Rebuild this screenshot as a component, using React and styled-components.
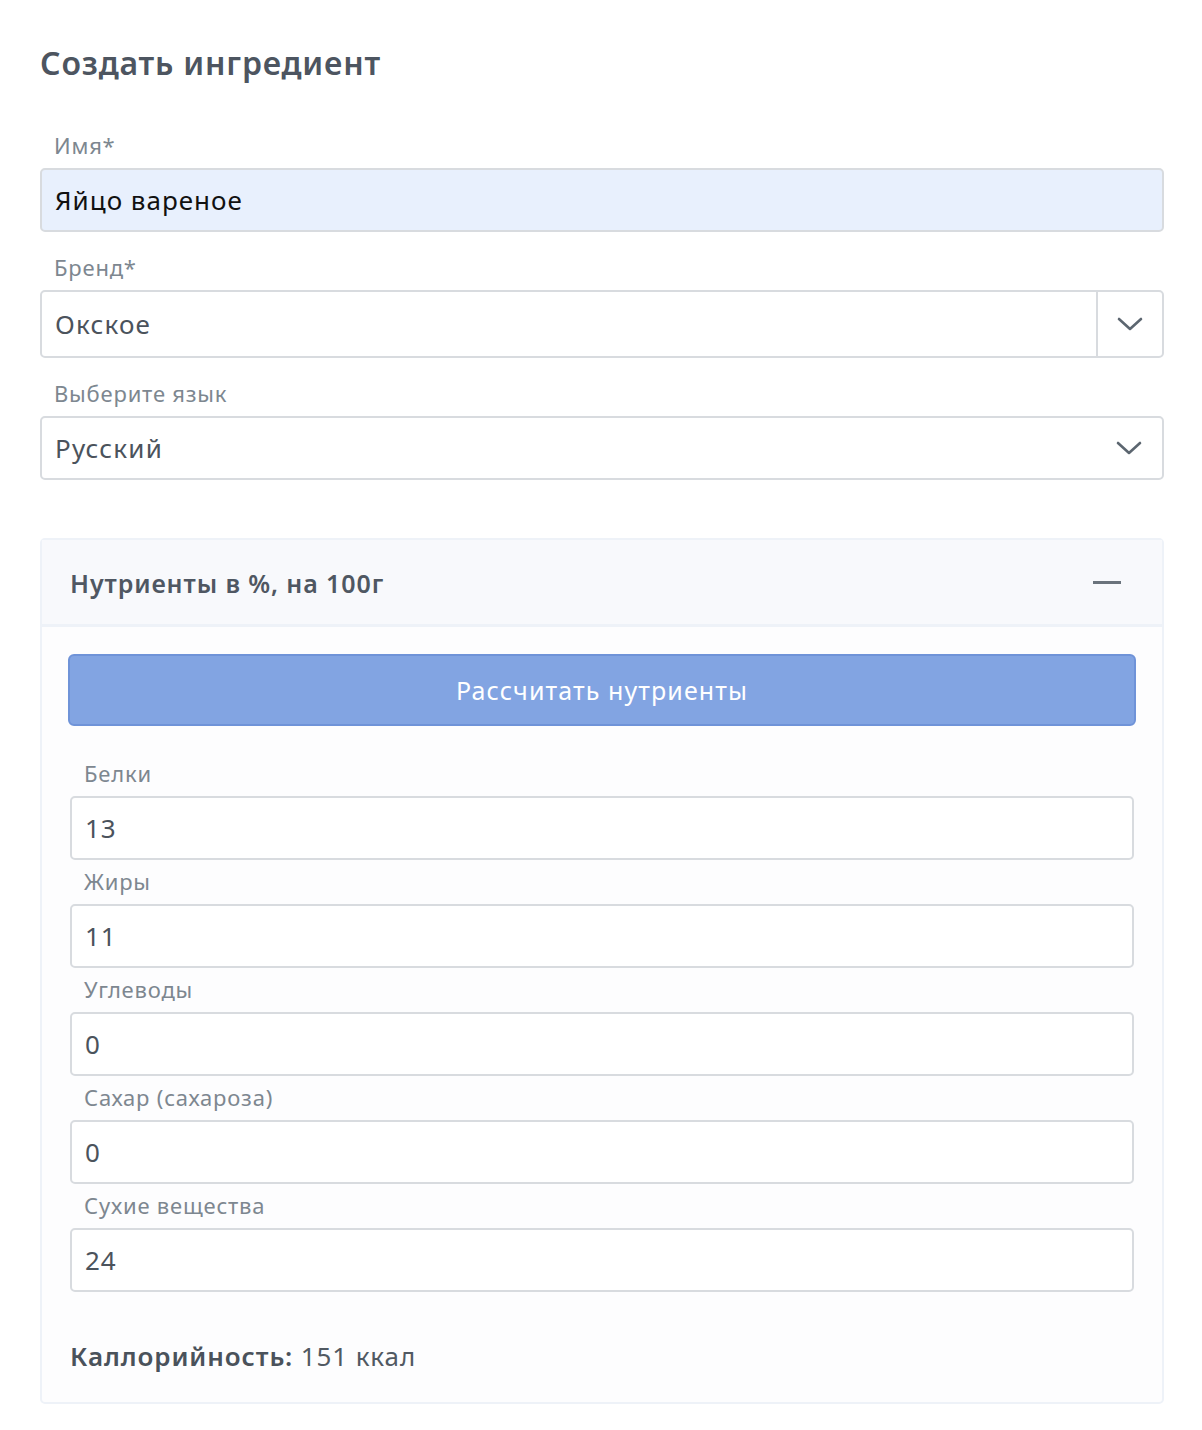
import React from "react";
import styled, { createGlobalStyle } from "styled-components";

const Global = createGlobalStyle`
  html, body { margin: 0; padding: 0; background: #ffffff; }
  body { font-family: "Noto Sans", "Open Sans", Lato, sans-serif; -webkit-font-smoothing: antialiased; }
  * { box-sizing: border-box; }
`;

const Page = styled.div`
  padding: 40px 38px 30px 40px;
`;

const Title = styled.h1`
  margin: 0 0 44px 0;
  font-size: 32px;
  line-height: 46px;
  font-weight: 600;
  color: #4d5560;
  letter-spacing: 0.8px;
`;

const Group = styled.div`
  display: flex;
  flex-direction: column;
  margin-bottom: ${(p) => p.$mb ?? 20}px;
`;

const Label = styled.label`
  font-size: 22px;
  line-height: 30px;
  color: #7d8790;
  padding-left: 14px;
  margin-bottom: 8px;
  letter-spacing: 0.8px;
`;

const Input = styled.div`
  height: 64px;
  flex: none;
  display: flex;
  align-items: center;
  padding: 0 13px;
  border: 2px solid #d8dbdf;
  border-radius: 5px;
  background: ${(p) => (p.$filled ? "#e8f0fd" : "#fff")};
  color: ${(p) => (p.$filled ? "#111" : "#4b535c")};
  font-size: 26px;
  letter-spacing: 1px;
`;

const SelectBox = styled.div`
  height: ${(p) => p.$h}px;
  flex: none;
  display: flex;
  align-items: stretch;
  border: 2px solid #d8dbdf;
  border-radius: 5px;
  background: #fff;
`;

const SelectValue = styled.div`
  flex: 1;
  display: flex;
  align-items: center;
  padding: 0 13px;
  font-size: 26px;
  color: #4b535c;
  letter-spacing: 1.2px;
`;

const Indicator = styled.div`
  width: 66px;
  display: flex;
  align-items: center;
  justify-content: center;
  border-left: ${(p) => (p.$sep ? "2px solid #d8dbdf" : "none")};
  color: #5c6670;
`;

const Card = styled.div`
  margin-top: 58px;
  border: 2px solid #eef2f8;
  border-radius: 5px;
  background: #fdfdfe;
`;

const CardHeader = styled.div`
  height: 87px;
  display: flex;
  align-items: center;
  justify-content: space-between;
  padding: 0 41px 0 28px;
  background: #f8f9fc;
  border-bottom: 3px solid #eef2f8;
`;

const CardTitle = styled.div`
  font-size: 25px;
  font-weight: 600;
  color: #4f5762;
  letter-spacing: 0.9px;
  padding-top: 2px;
`;

const Minus = styled.div`
  width: 28px;
  height: 3px;
  background: #6a737c;
`;

const CardBody = styled.div`
  padding: 27px 26px 28px 26px;
`;

const Button = styled.button`
  width: 100%;
  height: 72px;
  border: 2px solid #6f93d8;
  border-radius: 6px;
  background: #82a4e2;
  color: #fff;
  font-family: inherit;
  font-size: 25px;
  letter-spacing: 1.1px;
  margin-bottom: 32px;
`;

const Fields = styled.div`
  padding: 0 2px;
  display: flex;
  flex-direction: column;
`;

const Result = styled.div`
  margin-top: 46px;
  padding-left: 2px;
  font-size: 26px;
  color: #515962;
  letter-spacing: 0.9px;
  b { font-weight: 600; color: #4a525b; }
`;

const Chevron = () => (
  <svg width="26" height="16" viewBox="0 0 26 16" fill="none">
    <path d="M2 3 L13 13 L24 3" stroke="currentColor" strokeWidth="2.6" strokeLinecap="round" strokeLinejoin="round" />
  </svg>
);

const nutrients = [
  ["Белки", "13"],
  ["Жиры", "11"],
  ["Углеводы", "0"],
  ["Сахар (сахароза)", "0"],
  ["Сухие вещества", "24"],
];

export default function App() {
  return (
    <Page>
      <Global />
      <Title>Создать ингредиент</Title>
      <Group>
        <Label>Имя*</Label>
        <Input $filled>Яйцо вареное</Input>
      </Group>
      <Group>
        <Label>Бренд*</Label>
        <SelectBox $h={68}>
          <SelectValue>Окское</SelectValue>
          <Indicator $sep>
            <Chevron />
          </Indicator>
        </SelectBox>
      </Group>
      <Group $mb={0}>
        <Label>Выберите язык</Label>
        <SelectBox $h={64}>
          <SelectValue>Русский</SelectValue>
          <Indicator>
            <Chevron />
          </Indicator>
        </SelectBox>
      </Group>
      <Card>
        <CardHeader>
          <CardTitle>Нутриенты в %, на 100г</CardTitle>
          <Minus />
        </CardHeader>
        <CardBody>
          <Button>Рассчитать нутриенты</Button>
          <Fields>
            {nutrients.map(([l, v], i) => (
              <Group key={l} $mb={i === nutrients.length - 1 ? 0 : 6}>
                <Label>{l}</Label>
                <Input>{v}</Input>
              </Group>
            ))}
          </Fields>
          <Result>
            <b>Каллорийность:</b> 151 ккал
          </Result>
        </CardBody>
      </Card>
    </Page>
  );
}
